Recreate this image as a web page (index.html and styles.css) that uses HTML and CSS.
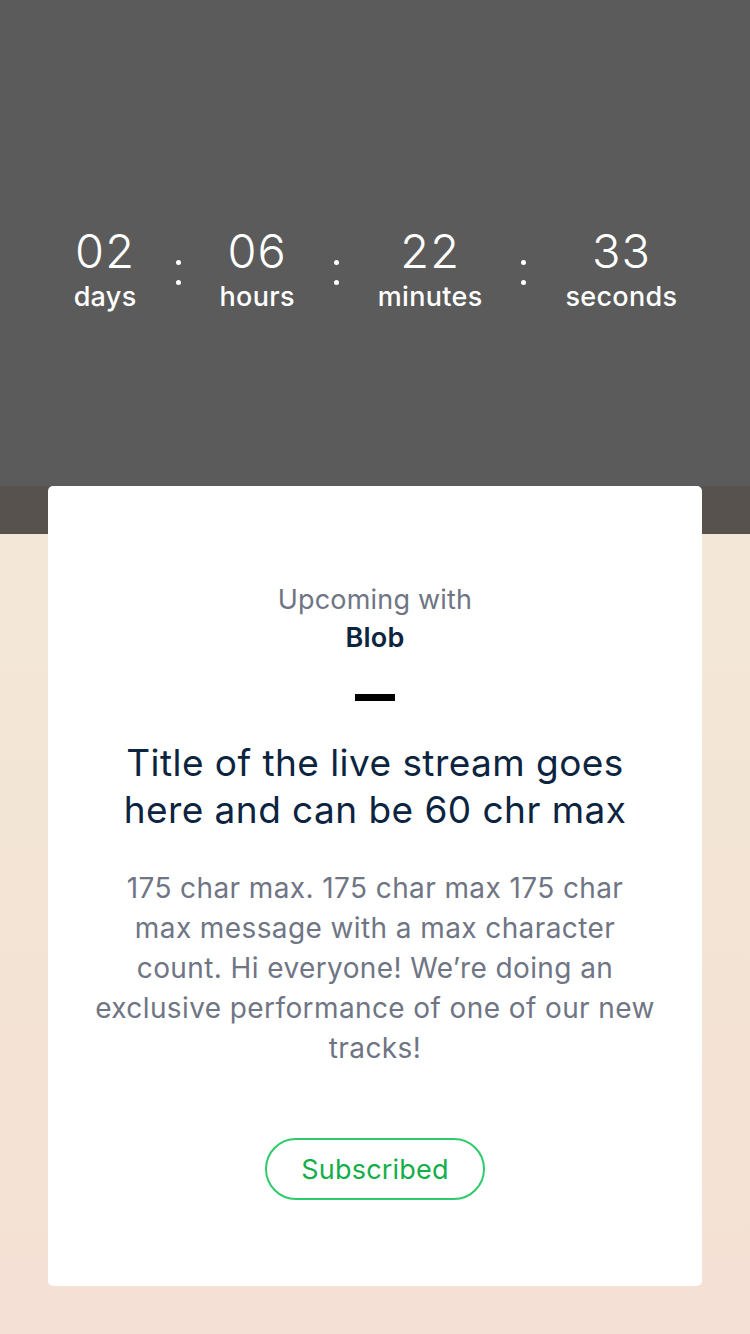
FILE: index.html
```html
<!DOCTYPE html>
<html lang="en">
<head>
<meta charset="utf-8">
<title>Upcoming live stream</title>
<link rel="stylesheet" href="styles.css">
</head>
<body>
<header class="hero">
  <div class="countdown">
    <div class="unit"><span class="num">02</span><span class="label">days</span></div>
    <span class="colon"><i></i><i></i></span>
    <div class="unit"><span class="num">06</span><span class="label">hours</span></div>
    <span class="colon"><i></i><i></i></span>
    <div class="unit"><span class="num">22</span><span class="label">minutes</span></div>
    <span class="colon"><i></i><i></i></span>
    <div class="unit"><span class="num">33</span><span class="label">seconds</span></div>
  </div>
</header>
<main class="content">
  <section class="card">
    <p class="upcoming">Upcoming with</p>
    <p class="artist">Blob</p>
    <div class="dash"></div>
    <h1 class="title">Title of the live stream goes<br>here and can be 60 chr max</h1>
    <p class="desc">175 char max. 175 char max 175 char<br>max message with a max character<br>count. Hi everyone! We’re doing an<br>exclusive performance of one of our new<br>tracks!</p>
    <button class="subscribed" type="button">Subscribed</button>
  </section>
</main>
</body>
</html>
```

FILE: styles.css
```css
* { box-sizing: border-box; }
html, body { margin: 0; padding: 0; }
body {
  width: 750px;
  min-height: 1334px;
  font-family: Inter, "Noto Sans", "Liberation Sans", sans-serif;
  background: #f4e0d4;
}
.hero {
  height: 486px;
  background: #5b5b5b;
  display: flex;
  justify-content: center;
  padding-top: 226px;
}
.countdown {
  display: flex;
  align-items: flex-start;
  gap: 39px;
  color: #ffffff;
  margin-left: 1px;
}
.unit {
  display: flex;
  flex-direction: column;
  align-items: center;
}
.num {
  font-size: 47px;
  font-weight: 300;
  line-height: 50px;
  letter-spacing: 1px;
}
.label {
  font-size: 27px;
  font-weight: 500;
  line-height: 32px;
  margin-top: 5px;
  letter-spacing: 0.3px;
}
.colon {
  display: flex;
  flex-direction: column;
  gap: 15px;
  padding-top: 34px;
}
.colon i {
  display: block;
  width: 5px;
  height: 5px;
  border-radius: 50%;
  background: #ffffff;
}
.content {
  padding: 0 48px 48px;
  background: linear-gradient(to bottom, #57524d 0, #57524d 48px, #f3e8d7 48px, #f4e0d4 100%);
}
.card {
  background: #ffffff;
  border-radius: 5px;
  height: 800px;
  padding: 95px 0 0;
  display: flex;
  flex-direction: column;
  align-items: center;
  text-align: center;
}
.upcoming, .artist {
  margin: 0;
  font-size: 27px;
  line-height: 38px;
  letter-spacing: 0.2px;
}
.upcoming { color: #6f7584; font-weight: 400; }
.artist { color: #0c2440; font-weight: 600; }
.dash {
  width: 40px;
  height: 7px;
  background: #000000;
  margin-top: 37px;
}
.title {
  margin: 38px 0 0;
  font-size: 37px;
  font-weight: 400;
  line-height: 47px;
  color: #0c2440;
  letter-spacing: 0.45px;
}
.desc {
  margin: 35px 0 0;
  font-size: 28px;
  line-height: 40px;
  color: #6f7584;
  letter-spacing: 0.4px;
}
.subscribed {
  margin-top: 70px;
  width: 220px;
  height: 62px;
  border: 2px solid #2dcb6b;
  border-radius: 31px;
  background: #ffffff;
  color: #13ae4a;
  font-family: inherit;
  font-size: 27px;
  font-weight: 400;
  letter-spacing: 0.2px;
  padding: 0;
}
```
